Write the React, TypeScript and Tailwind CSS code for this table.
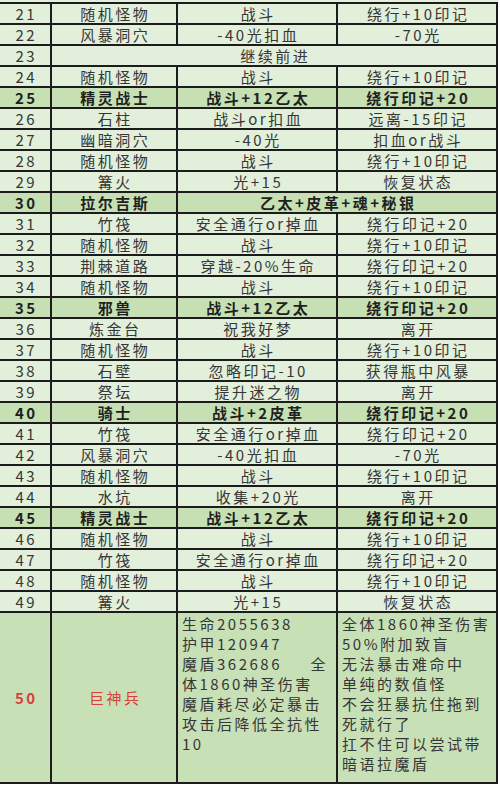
import React from 'react';

type Row = {
  no: number;
  name: string;
  a: string;
  b?: string;
  bold?: boolean;
  span?: 'ab' | 'nameab';
};

const rows: Row[] = [
  { no: 21, name: '随机怪物', a: '战斗', b: '绕行+10印记' },
  { no: 22, name: '风暴洞穴', a: '-40光扣血', b: '-70光' },
  { no: 23, name: '继续前进', a: '', span: 'nameab' },
  { no: 24, name: '随机怪物', a: '战斗', b: '绕行+10印记' },
  { no: 25, name: '精灵战士', a: '战斗+12乙太', b: '绕行印记+20', bold: true },
  { no: 26, name: '石柱', a: '战斗or扣血', b: '远离-15印记' },
  { no: 27, name: '幽暗洞穴', a: '-40光', b: '扣血or战斗' },
  { no: 28, name: '随机怪物', a: '战斗', b: '绕行+10印记' },
  { no: 29, name: '篝火', a: '光+15', b: '恢复状态' },
  { no: 30, name: '拉尔吉斯', a: '乙太+皮革+魂+秘银', bold: true, span: 'ab' },
  { no: 31, name: '竹筏', a: '安全通行or掉血', b: '绕行印记+20' },
  { no: 32, name: '随机怪物', a: '战斗', b: '绕行+10印记' },
  { no: 33, name: '荆棘道路', a: '穿越-20%生命', b: '绕行印记+20' },
  { no: 34, name: '随机怪物', a: '战斗', b: '绕行+10印记' },
  { no: 35, name: '邪兽', a: '战斗+12乙太', b: '绕行印记+20', bold: true },
  { no: 36, name: '炼金台', a: '祝我好梦', b: '离开' },
  { no: 37, name: '随机怪物', a: '战斗', b: '绕行+10印记' },
  { no: 38, name: '石壁', a: '忽略印记-10', b: '获得瓶中风暴' },
  { no: 39, name: '祭坛', a: '提升迷之物', b: '离开' },
  { no: 40, name: '骑士', a: '战斗+2皮革', b: '绕行印记+20', bold: true },
  { no: 41, name: '竹筏', a: '安全通行or掉血', b: '绕行印记+20' },
  { no: 42, name: '风暴洞穴', a: '-40光扣血', b: '-70光' },
  { no: 43, name: '随机怪物', a: '战斗', b: '绕行+10印记' },
  { no: 44, name: '水坑', a: '收集+20光', b: '离开' },
  { no: 45, name: '精灵战士', a: '战斗+12乙太', b: '绕行印记+20', bold: true },
  { no: 46, name: '随机怪物', a: '战斗', b: '绕行+10印记' },
  { no: 47, name: '竹筏', a: '安全通行or掉血', b: '绕行印记+20' },
  { no: 48, name: '随机怪物', a: '战斗', b: '绕行+10印记' },
  { no: 49, name: '篝火', a: '光+15', b: '恢复状态' },
];

const bossStats = ['生命2055638', '护甲120947'];
const bossStatsTail = ['体1860神圣伤害', '魔盾耗尽必定暴击', '攻击后降低全抗性', '10'];
const bossNotes = [
  '全体1860神圣伤害',
  '50%附加致盲',
  '无法暴击难命中',
  '单纯的数值怪',
  '不会狂暴抗住拖到',
  '死就行了',
  '扛不住可以尝试带',
  '暗语拉魔盾',
];

// trailing letter-spacing pushes text left, pl compensates
const cell = 'flex items-center justify-center pl-[2.5px] border-r-2 border-[#1c1c1c] whitespace-nowrap';

function TableRow({ row }: { row: Row }) {
  const bg = row.bold ? 'bg-[#c6e0b4] font-bold text-[#1f1f1f]' : 'bg-[#e2efda] text-[#363636]';
  return (
    <div className={`flex h-[21px] border-b-2 border-[#1c1c1c] ${bg}`}>
      <div className={`${cell} w-[52px]`}>{row.no}</div>
      {row.span === 'nameab' ? (
        <div className={`${cell} w-[446px]`}>{row.name}</div>
      ) : (
        <>
          <div className={`${cell} w-[126px]`}>{row.name}</div>
          {row.span === 'ab' ? (
            <div className={`${cell} w-[320px]`}>{row.a}</div>
          ) : (
            <>
              <div className={`${cell} w-[160px]`}>{row.a}</div>
              <div className={`${cell} w-[160px]`}>{row.b}</div>
            </>
          )}
        </>
      )}
    </div>
  );
}

export default function App() {
  return (
    <div
      className="w-[500px] h-[785px] overflow-hidden bg-white text-[15px] leading-[20px] tracking-[2.5px]"
      style={{ fontFamily: '"Noto Sans CJK SC", "Noto Sans", sans-serif' }}
    >
      <div className="w-[498px] h-[2px] bg-[#e2efda]" />
      <div className="w-[498px] border-t-2 border-[#1c1c1c]">
        {rows.map((row) => (
          <TableRow key={row.no} row={row} />
        ))}

        <div className="flex h-[171px] border-b-2 border-[#1c1c1c] bg-[#c8e0b6] text-[#363636]">
          <div className={`${cell} w-[52px] text-[#d8403c] font-semibold`}>50</div>
          <div className={`${cell} w-[126px] text-[#d8403c]`}>巨神兵</div>
          <div className="w-[160px] border-r-2 border-[#1c1c1c] pl-1 pr-2 pt-[1px] whitespace-nowrap">
            {bossStats.map((line) => (
              <div key={line}>{line}</div>
            ))}
            <div className="flex justify-between">
              <span>魔盾362686</span>
              <span>全</span>
            </div>
            {bossStatsTail.map((line) => (
              <div key={line}>{line}</div>
            ))}
          </div>
          <div className="w-[160px] border-r-2 border-[#1c1c1c] pl-1 pt-[1px] whitespace-nowrap">
            {bossNotes.map((line) => (
              <div key={line}>{line}</div>
            ))}
          </div>
        </div>
      </div>
    </div>
  );
}
